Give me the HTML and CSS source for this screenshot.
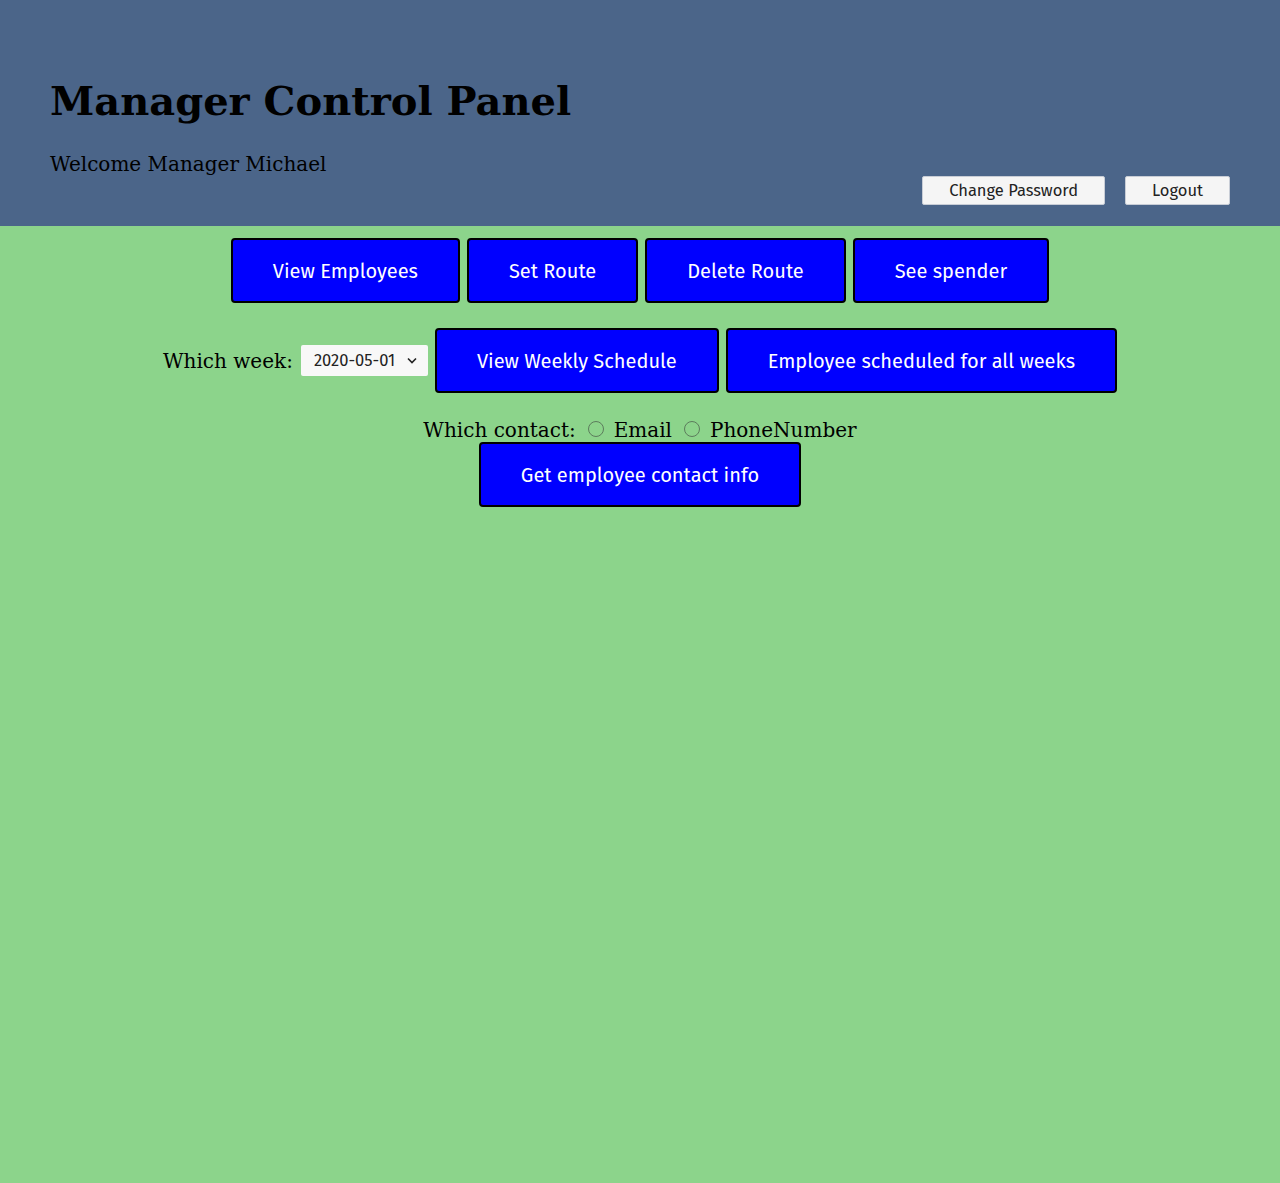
FILE: index.html
```html
<!DOCTYPE html>
<html>
<head>
<meta charset="utf-8">
<title>Manager Control Panel</title>
<link rel="stylesheet" href="styles.css">
</head>
<body>
<header class="header">
  <div class="title-block">
    <h1 class="title">Manager Control Panel</h1>
    <p class="welcome">Welcome Manager Michael</p>
  </div>
  <div class="account-actions">
    <button class="light-btn">Change Password</button>
    <button class="light-btn">Logout</button>
  </div>
</header>
<main class="panel">
  <div class="row row-main">
    <button class="blue-btn">View Employees</button>
    <button class="blue-btn">Set Route</button>
    <button class="blue-btn">Delete Route</button>
    <button class="blue-btn">See spender</button>
  </div>
  <div class="row row-week">
    <label class="label">Which week:</label>
    <span class="select-wrap">
      <select class="week-select">
        <option>2020-05-01</option>
      </select>
      <svg class="chevron" width="10" height="7" viewBox="0 0 10 7"><path d="M1 1.5 L5 5.5 L9 1.5" fill="none" stroke="#222" stroke-width="1.6"/></svg>
    </span>
    <button class="blue-btn">View Weekly Schedule</button>
    <button class="blue-btn">Employee scheduled for all weeks</button>
  </div>
  <div class="contact">
    <div class="contact-line">
      <span class="label">Which contact:</span>
      <input type="radio" name="contact" class="radio" id="email"><label for="email" class="label">Email</label>
      <input type="radio" name="contact" class="radio" id="phone"><label for="phone" class="label">PhoneNumber</label>
    </div>
    <button class="blue-btn">Get employee contact info</button>
  </div>
</main>
</body>
</html>
```

FILE: styles.css
```css
html, body {
  margin: 0;
  padding: 0;
}
body {
  background: #8cd48b;
  min-height: 1183px;
  font-family: "DejaVu Serif", serif;
}
.header {
  background: #4b6589;
  padding: 78px 50px 21px 50px;
  display: flex;
  justify-content: space-between;
  align-items: flex-end;
}
.title {
  margin: 0;
  font-size: 40px;
  font-weight: bold;
  line-height: 46px;
  color: #000;
}
.welcome {
  margin: 28px 0 29px 0;
  font-size: 20px;
  line-height: 24px;
}
.account-actions {
  display: flex;
  gap: 20px;
}
.light-btn {
  font-family: "Fira Sans", system-ui, sans-serif;
  font-size: 16.5px;
  height: 29px;
  padding: 0 26px;
  background: #f5f5f5;
  border: 1px solid #c8cdd6;
  border-radius: 2px;
  color: #222;
}
.panel {
  display: flex;
  flex-direction: column;
  align-items: center;
  padding-top: 12px;
}
.row {
  display: flex;
  justify-content: center;
  align-items: center;
  gap: 7px;
}
.row-week {
  margin-top: 25px;
}
.blue-btn {
  font-family: "Fira Sans", system-ui, sans-serif;
  font-size: 20px;
  line-height: 24px;
  height: 65px;
  padding: 0 40px;
  background: #0000ff;
  color: #fff;
  border: 2px solid #000;
  border-radius: 4px;
}
.label {
  font-size: 20px;
  line-height: 24px;
  color: #000;
}
.select-wrap {
  position: relative;
  display: inline-block;
  margin-left: 1px;
}
.week-select {
  appearance: none;
  -webkit-appearance: none;
  font-family: "Fira Sans", system-ui, sans-serif;
  font-size: 16.5px;
  width: 127px;
  height: 31px;
  padding: 0 0 0 13px;
  background: #f8f8f8;
  border: none;
  border-radius: 2px;
  color: #222;
}
.chevron {
  position: absolute;
  right: 11px;
  top: 12px;
  pointer-events: none;
}
.contact {
  margin-top: 25px;
  display: flex;
  flex-direction: column;
  align-items: center;
}
.contact-line {
  display: flex;
  align-items: center;
}
.radio {
  appearance: none;
  -webkit-appearance: none;
  width: 16px;
  height: 16px;
  border: 1px solid #5c7c5c;
  border-radius: 50%;
  margin: 0 10px 3px 12px;
  background: transparent;
}
```
